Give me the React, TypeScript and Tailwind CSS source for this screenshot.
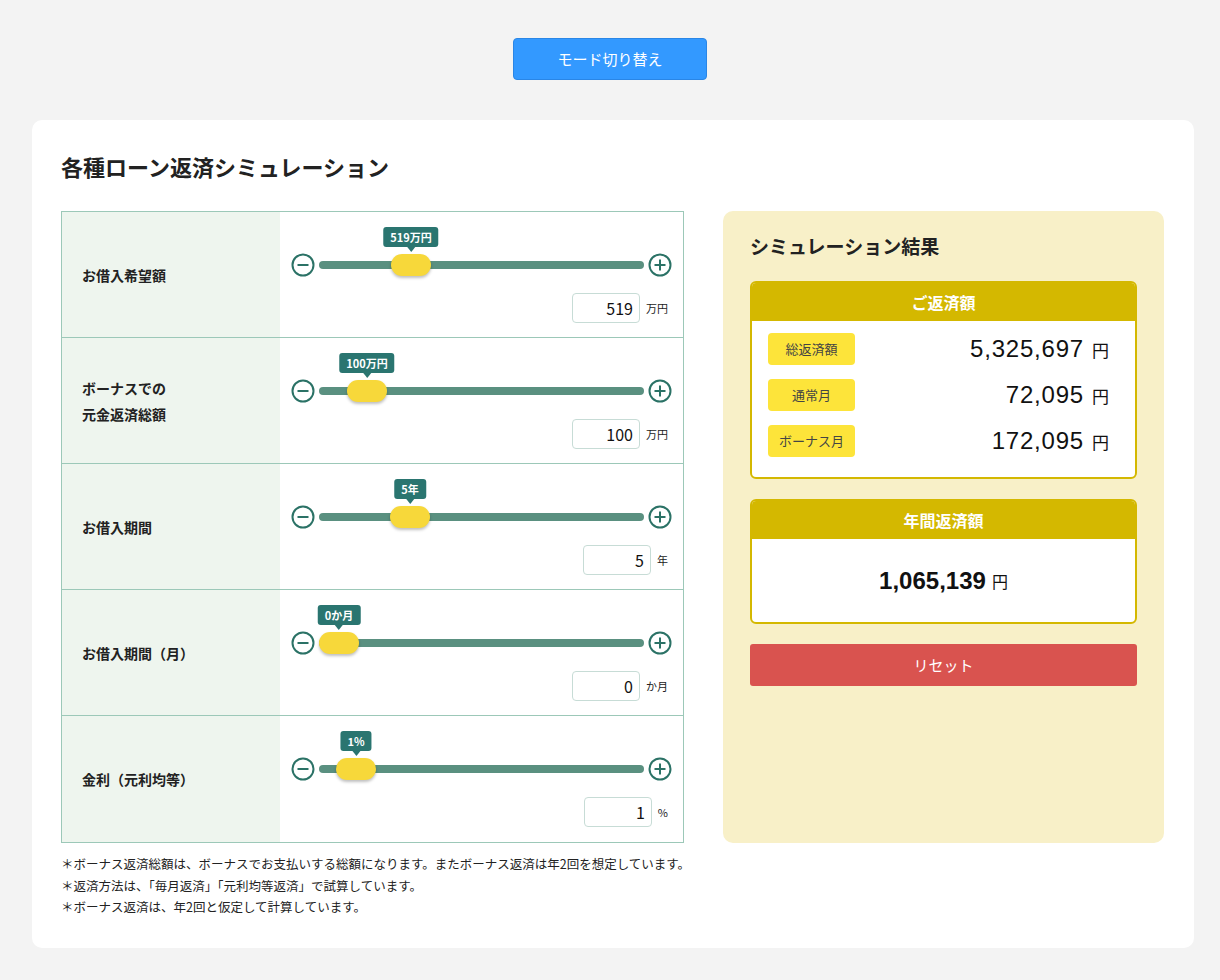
const F = { fontFamily: '"Noto Sans CJK JP", "Liberation Sans", sans-serif' };

type Row = { label: string[]; tip: string; pos: number; value: string; unit: string };

const rows: Row[] = [
  { label: ["お借入希望額"], tip: "519万円", pos: 72, value: "519", unit: "万円" },
  { label: ["ボーナスでの", "元金返済総額"], tip: "100万円", pos: 28, value: "100", unit: "万円" },
  { label: ["お借入期間"], tip: "5年", pos: 71, value: "5", unit: "年" },
  { label: ["お借入期間（月）"], tip: "0か月", pos: 0, value: "0", unit: "か月" },
  { label: ["金利（元利均等）"], tip: "1%", pos: 17, value: "1", unit: "%" },
];

function Circle({ plus }: { plus?: boolean }) {
  return (
    <svg width="24" height="24" viewBox="0 0 24 24" className="shrink-0">
      <circle cx="12" cy="12" r="10.5" fill="none" stroke="#2b7266" strokeWidth="2" />
      <path d="M6.5 12h11" stroke="#2b7266" strokeWidth="2" />
      {plus && <path d="M12 6.5v11" stroke="#2b7266" strokeWidth="2" />}
    </svg>
  );
}

function SliderRow({ r, last }: { r: Row; last: boolean }) {
  return (
    <div className={`flex h-[126px] ${last ? "" : "border-b border-[#9cc8b8]"}`}>
      <div className="flex w-[218px] shrink-0 flex-col justify-center bg-[#eef5ee] pl-5 text-[14px] font-bold leading-[26px] text-[#222]">
        {r.label.map((l) => (
          <div key={l}>{l}</div>
        ))}
      </div>
      <div className="flex flex-1 flex-col px-[11px] pt-[41px]">
        <div className="flex items-center gap-[4px]">
          <Circle />
          <div className="relative h-[8px] flex-1 rounded-full bg-[#5a9080]">
            <div className="absolute top-[-7px] h-[22px] w-[40px]" style={{ left: r.pos }}>
              <div className="h-full w-full rounded-[11px] bg-[#f7d83a] shadow-[0_2px_3px_rgba(0,0,0,0.25)]" />
              <div className="absolute bottom-[29px] left-1/2 -translate-x-1/2 whitespace-nowrap rounded-[3px] bg-[#2a7570] px-[7px] py-[2px] text-[11px] font-bold leading-[16px] text-white">
                {r.tip}
                <div className="absolute left-1/2 top-full h-0 w-0 -translate-x-1/2 border-x-[4px] border-t-[5px] border-x-transparent border-t-[#2a7570]" />
              </div>
            </div>
          </div>
          <Circle plus />
        </div>
        <div className="mt-[16px] flex items-center justify-end gap-[6px] pr-[4px]">
          <div className="h-[30px] w-[68px] rounded-[4px] border border-[#c7dcd6] bg-white pr-[6px] text-right text-[16px] leading-[28px] text-[#111]">
            {r.value}
          </div>
          <span className="text-[11px] text-[#222]">{r.unit}</span>
        </div>
      </div>
    </div>
  );
}

function Amount({ label, value }: { label: string; value: string }) {
  return (
    <div className="flex items-center justify-between">
      <div className="flex h-[32px] w-[87px] items-center justify-center rounded-[4px] bg-[#fde43a] text-[13px] text-[#444]">
        {label}
      </div>
      <div className="flex items-baseline gap-[8px] pr-[10px] leading-none text-[#111]">
        <span className="text-[24px] tracking-[0.8px]" style={{ fontFamily: '"Liberation Sans", sans-serif' }}>{value}</span>
        <span className="text-[17px]">円</span>
      </div>
    </div>
  );
}

export default function App() {
  return (
    <div className="min-h-[980px] bg-[#f3f3f3] pt-[38px]" style={F}>
      <div className="flex justify-center">
        <button className="h-[42px] w-[194px] rounded-[4px] border border-[#2a86e6] bg-[#3399ff] text-[15px] text-white">
          モード切り替え
        </button>
      </div>
      <div className="ml-[32px] mr-[26px] mt-[40px] rounded-[10px] bg-white px-[29px] pb-[30px] pt-[30px]">
        <h1 className="text-[22px] font-bold leading-[32px] text-[#222]">各種ローン返済シミュレーション</h1>
        <div className="mt-[29px] flex gap-[39px]">
          <div className="w-[623px] shrink-0 border border-[#9cc8b8]">
            {rows.map((r, i) => (
              <SliderRow key={i} r={r} last={i === rows.length - 1} />
            ))}
          </div>
          <div className="flex w-[441px] flex-col rounded-[10px] bg-[#f8f0c8] px-[27px] pt-[20px]">
            <h2 className="text-[19px] font-bold leading-[30px] text-[#222]">シミュレーション結果</h2>
            <div className="mt-[20px] overflow-hidden rounded-[6px] border-2 border-[#d4b800] bg-white">
              <div className="bg-[#d4b800] py-[5px] text-center text-[16px] font-bold leading-[28px] text-white">ご返済額</div>
              <div className="flex flex-col gap-[14px] px-[16px] pb-[20px] pt-[12px]">
                <Amount label="総返済額" value="5,325,697" />
                <Amount label="通常月" value="72,095" />
                <Amount label="ボーナス月" value="172,095" />
              </div>
            </div>
            <div className="mt-[20px] overflow-hidden rounded-[6px] border-2 border-[#d4b800] bg-white">
              <div className="bg-[#d4b800] py-[5px] text-center text-[16px] font-bold leading-[28px] text-white">年間返済額</div>
              <div className="flex h-[83px] items-center justify-center gap-[6px] text-[#111]">
                <span className="text-[24px] font-bold" style={{ fontFamily: '"Liberation Sans", sans-serif' }}>1,065,139</span>
                <span className="text-[16px]">円</span>
              </div>
            </div>
            <button className="mt-[20px] h-[42px] rounded-[3px] bg-[#d9534f] text-[15px] text-white">リセット</button>
          </div>
        </div>
        <div className="mt-[10px] text-[12.5px] leading-[21.5px] text-[#222]">
          <p>＊ボーナス返済総額は、ボーナスでお支払いする総額になります。またボーナス返済は年2回を想定しています。</p>
          <p>＊返済方法は、「毎月返済」「元利均等返済」で試算しています。</p>
          <p>＊ボーナス返済は、年2回と仮定して計算しています。</p>
        </div>
      </div>
    </div>
  );
}
